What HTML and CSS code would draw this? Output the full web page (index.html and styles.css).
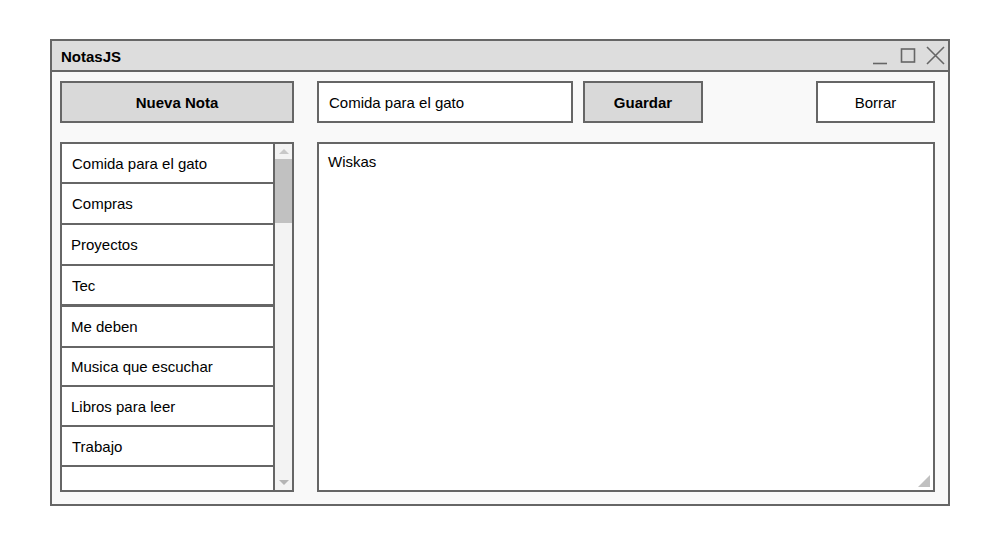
FILE: index.html
```html
<!DOCTYPE html>
<html lang="es">
<head>
<meta charset="utf-8">
<title>NotasJS</title>
<link rel="stylesheet" href="styles.css">
</head>
<body>
<div class="window">
  <div class="titlebar">
    <span class="title">NotasJS</span>
    <div class="controls">
      <svg class="ctl" width="74" height="22" viewBox="0 0 74 22">
        <line x1="2" y1="18.5" x2="16" y2="18.5" stroke="#666" stroke-width="1.6"/>
        <rect x="30.5" y="4" width="13" height="13" fill="none" stroke="#666" stroke-width="1.6"/>
        <path d="M56 2 L73 19 M73 2 L56 19" stroke="#666" stroke-width="1.6" fill="none"/>
      </svg>
    </div>
  </div>
  <div class="content">
    <div class="toolbar">
      <div class="btn btn-primary btn-new">Nueva Nota</div>
      <div class="field">Comida para el gato</div>
      <div class="btn btn-primary btn-save">Guardar</div>
      <div class="spacer"></div>
      <div class="btn btn-plain btn-del">Borrar</div>
    </div>
    <div class="main">
      <div class="list">
        <div class="items">
          <div class="item">Comida para el gato</div>
          <div class="item tall">Compras</div>
          <div class="item tall shift">Proyectos</div>
          <div class="item tall">Tec</div>
          <div class="item tall shift">Me deben</div>
          <div class="item short shift">Musica que escuchar</div>
          <div class="item shift">Libros para leer</div>
          <div class="item">Trabajo</div>
          <div class="item last"></div>
        </div>
        <div class="scrollbar">
          <div class="arrow up"></div>
          <div class="thumb"></div>
          <div class="track"></div>
          <div class="arrow down"></div>
        </div>
      </div>
      <div class="editor">
        <div class="editor-text">Wiskas</div>
        <div class="grip"></div>
      </div>
    </div>
  </div>
</div>
</body>
</html>
```

FILE: styles.css
```css
* { box-sizing: border-box; }

html, body {
  margin: 0;
  padding: 0;
  background: #ffffff;
}

body {
  padding: 39px 0 0 50px;
  font-family: "Liberation Sans", Arial, sans-serif;
  font-size: 15px;
  color: #000;
}

.window {
  width: 900px;
  height: 467px;
  border: 2px solid #666;
  background: #f9f9f9;
  display: flex;
  flex-direction: column;
}

.titlebar {
  height: 31px;
  flex: none;
  background: #dddddd;
  border-bottom: 2px solid #666;
  display: flex;
  align-items: center;
  justify-content: space-between;
  padding: 0 0 0 9px;
}

.title {
  font-weight: bold;
  font-size: 15px;
  margin-top: 1px;
}

.controls {
  display: flex;
  align-items: center;
  padding-right: 3px;
}

.ctl { display: block; }

.content {
  flex: 1;
  padding: 9px 13px 0 8px;
  display: flex;
  flex-direction: column;
  gap: 19px;
}

.toolbar {
  display: flex;
  height: 42px;
  flex: none;
}

.btn, .field {
  border: 2px solid #666;
  display: flex;
  align-items: center;
  height: 42px;
}

.btn { justify-content: center; }

.btn-primary {
  background: #d9d9d9;
  font-weight: bold;
}

.btn-plain { background: #ffffff; }

.btn-new { width: 234px; }

.field {
  width: 256px;
  margin-left: 23px;
  background: #ffffff;
  padding-left: 10px;
}

.btn-save {
  width: 120px;
  margin-left: 10px;
}

.spacer { flex: 1; }

.btn-del { width: 119px; }

.main {
  display: flex;
  height: 350px;
  gap: 23px;
}

.list {
  width: 234px;
  border: 2px solid #666;
  display: flex;
  overflow: hidden;
  background: #ffffff;
}

.items {
  flex: 1;
  display: flex;
  flex-direction: column;
}

.item {
  height: 40px;
  flex: none;
  border-bottom: 2px solid #666;
  display: flex;
  align-items: center;
  padding-left: 10px;
  background: #ffffff;
}

.item.tall { height: 41px; }
.item.short { height: 39px; }
.item.shift { padding-left: 9px; }
.item:nth-child(4) { border-bottom-width: 3px; }

.item.last {
  flex: 1;
  border-bottom: none;
}

.scrollbar {
  width: 19px;
  border-left: 2px solid #666;
  background: #f3f3f3;
  display: flex;
  flex-direction: column;
}

.arrow {
  height: 15px;
  flex: none;
  position: relative;
}

.arrow::after {
  content: "";
  position: absolute;
  left: 4px;
  width: 0;
  height: 0;
  border-left: 5px solid transparent;
  border-right: 5px solid transparent;
}

.arrow.up::after {
  top: 5px;
  border-bottom: 5px solid #c8c8c8;
}

.arrow.down::after {
  bottom: 5px;
  border-top: 5px solid #b4b4b4;
}

.thumb {
  height: 64px;
  flex: none;
  background: #c1c1c1;
}

.track { flex: 1; }

.editor {
  flex: 1;
  border: 2px solid #666;
  background: #ffffff;
  position: relative;
  padding: 9px 9px;
}

.editor-text {
  line-height: 17px;
}

.grip {
  position: absolute;
  right: 3px;
  bottom: 3px;
  width: 0;
  height: 0;
  border-left: 12px solid transparent;
  border-bottom: 12px solid #c0c0c0;
}
```
